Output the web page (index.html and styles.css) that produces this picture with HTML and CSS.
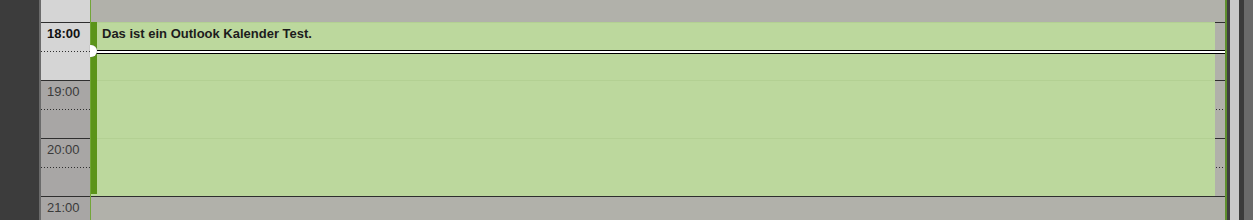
FILE: index.html
```html
<!DOCTYPE html>
<html lang="de">
<head>
    <meta charset="UTF-8">
    <title>Kalender</title>
    <link rel="stylesheet" href="styles.css">
</head>
<body>
    <div class="calendar">
        <div class="edge-left"></div>
        <div class="edge-border"></div>

        <div class="times">
            <div class="slot slot-partial light"></div>
            <div class="slot light current"><span>18:00</span></div>
            <div class="slot"><span>19:00</span></div>
            <div class="slot"><span>20:00</span></div>
            <div class="slot"><span>21:00</span></div>
        </div>

        <div class="divider"></div>

        <div class="grid">
            <div class="row row-partial"></div>
            <div class="row"></div>
            <div class="row"></div>
            <div class="row"></div>
            <div class="row"></div>

            <div class="event">
                <div class="event-bar"></div>
                <div class="event-title">Das ist ein Outlook Kalender Test.</div>
            </div>

            <div class="now-line"></div>
            <div class="now-dot"></div>
        </div>

        <div class="edge-right">
            <div class="strip strip-green"></div>
            <div class="strip strip-dark"></div>
            <div class="strip strip-light"></div>
            <div class="strip strip-dark2"></div>
            <div class="strip strip-grey"></div>
        </div>
    </div>
</body>
</html>
```

FILE: styles.css
```css
html, body {
    margin: 0;
    padding: 0;
    height: 220px;
    overflow: hidden;
    font-family: "Liberation Sans", Arial, sans-serif;
}

.calendar {
    display: flex;
    height: 220px;
    overflow: hidden;
}

.edge-left {
    width: 39px;
    background: #3c3c3c;
}

.edge-border {
    width: 2px;
    background: #6b6b6b;
}

/* Zeitspalte */
.times {
    width: 49px;
    background: #a8a6a5;
}

.slot {
    position: relative;
    box-sizing: border-box;
    height: 58px;
    border-top: 1px solid #2e2e2e;
    padding: 3px 0 0 6px;
    font-size: 13px;
    line-height: 16px;
    color: #3a3a3a;
}

.slot::after {
    content: "";
    position: absolute;
    left: 0;
    right: 0;
    top: 28px;
    height: 1px;
    background: repeating-linear-gradient(to right, #2e2e2e 0 1px, transparent 1px 3px);
}

.slot-partial {
    height: 22px;
    border-top: none;
}

.slot-partial::after {
    display: none;
}

.slot.light {
    background: #d5d5d5;
}

.slot.current {
    font-weight: bold;
    color: #111;
}

.divider {
    width: 1px;
    background: #72a638;
}

/* Raster */
.grid {
    position: relative;
    flex: 1;
    background: #b1b1aa;
}

.row {
    position: relative;
    box-sizing: border-box;
    height: 58px;
    border-top: 1px solid #2e2e2e;
}

.row::after {
    content: "";
    position: absolute;
    left: 0;
    right: 0;
    top: 28px;
    height: 1px;
    background: repeating-linear-gradient(to right, #2e2e2e 0 1px, transparent 1px 3px);
}

.row-partial {
    height: 22px;
    border-top: none;
}

.row-partial::after {
    display: none;
}

.event {
    position: absolute;
    top: 22px;
    left: 0;
    width: 1124px;
    height: 174px;
    display: flex;
    background: repeating-linear-gradient(to bottom, #b3d093 0 1px, #bcd89d 1px 58px);
}

.event-bar {
    width: 6px;
    height: 172px;
    background: #5b9419;
}

.event-title {
    padding: 4px 0 0 5px;
    font-size: 13px;
    line-height: 16px;
    font-weight: bold;
    color: #1c1c1c;
}

.now-line {
    position: absolute;
    top: 50px;
    left: 0;
    right: 0;
    height: 2px;
    background: #fff;
    border-top: 1px solid #000;
    border-bottom: 1px solid #000;
}

.now-dot {
    position: absolute;
    top: 45px;
    left: -1px;
    width: 7px;
    height: 12px;
    border-radius: 0 6px 6px 0;
    background: #fff;
    box-shadow: 0 0 1px #666;
}

.edge-right {
    display: flex;
}

.strip-green { width: 2px; background: #5f8f2e; }
.strip-dark { width: 3px; background: #3e3e3e; }
.strip-light { width: 9px; background: #c8c8c8; }
.strip-dark2 { width: 5px; background: #3b3b3b; }
.strip-grey { width: 9px; background: #6a6a6a; }
```
